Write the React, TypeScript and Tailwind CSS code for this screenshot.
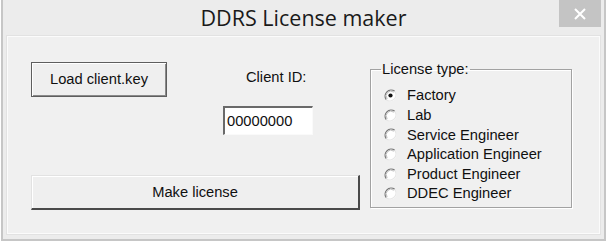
const options = [
  'Factory',
  'Lab',
  'Service Engineer',
  'Application Engineer',
  'Product Engineer',
  'DDEC Engineer',
];

function Radio({ checked }: { checked?: boolean }) {
  return (
    <svg width="13" height="13" viewBox="0 0 13 13" className="shrink-0">
      <circle cx="6.5" cy="6.5" r="6" fill="#ffffff" />
      <path d="M2.3 10.7 A6 6 0 0 1 10.7 2.3" fill="none" stroke="#777777" strokeWidth="1.3" />
      <path d="M3.2 9.8 A4.7 4.7 0 0 1 9.8 3.2" fill="none" stroke="#bdbdbd" strokeWidth="1" />
      <path d="M10.7 2.3 A6 6 0 0 1 2.3 10.7" fill="none" stroke="#e6e6e6" strokeWidth="1.2" />
      {checked && <circle cx="6.5" cy="6.5" r="2.1" fill="#111111" />}
    </svg>
  );
}

export default function App() {
  return (
    <div className="w-[610px] h-[242px] bg-white overflow-hidden font-['Liberation_Sans',Arial,sans-serif] text-[14.7px] text-[#101010]">
      <div className="ml-[1px] w-[605px] h-[241px] bg-[#ececec] border-x-[2px] border-b-[2px] border-[#c6c6c6] flex flex-col">
        {/* title bar */}
        <div className="relative h-[35px] flex items-center justify-center shrink-0">
          <span className="font-['Open_Sans',sans-serif] text-[21.5px] text-[#1a1a1a] leading-none mt-[1px]">
            DDRS License maker
          </span>
          <div className="absolute right-[3px] top-0 w-[42px] h-[27px] bg-[#c4c4c4] flex items-center justify-center">
            <svg width="14" height="12" viewBox="0 0 14 12">
              <path d="M2 1 L12 11 M12 1 L2 11" stroke="#ffffff" strokeWidth="2" />
            </svg>
          </div>
        </div>

        {/* client area */}
        <div className="mx-[4px] mt-[1px] mb-[5px] flex-1 bg-[#f0f0f0] border border-[#fbfbfb] shadow-[0_0_0_1px_#e2e2e2] flex items-start pl-[23px] pt-[25px]">
          <div className="flex flex-col w-[329px]">
            <div className="flex items-start">
              <button className="w-[136px] h-[35px] bg-[#efefef] border border-[#5e5e5e] shadow-[inset_1px_1px_0_#ffffff,inset_-1px_-1px_0_#8a8a8a] flex items-center justify-center">
                Load client.key
              </button>
              <div className="ml-[56px] flex flex-col">
                <span className="ml-[23px] mt-[7px] leading-[17px]">Client ID:</span>
                <div className="mt-[20px] w-[90px] h-[29px] bg-white border-t-[2px] border-l-[2px] border-t-[#6a6a6a] border-l-[#6a6a6a] border-b border-r border-b-[#fafafa] border-r-[#fafafa] flex items-center pl-[2px] leading-none">
                  00000000
                </div>
              </div>
            </div>
            <button className="mt-[40px] w-[329px] h-[35px] bg-[#efefef] border-t border-l border-t-[#e2e2e2] border-l-[#e2e2e2] border-b-[2px] border-r-[2px] border-b-[#4a4a4a] border-r-[#4a4a4a] shadow-[inset_1px_1px_0_#ffffff] flex items-center justify-center">
              Make license
            </button>
          </div>

          <fieldset className="ml-[10px] -mt-[1px] w-[202px] h-[147px] border border-[#a2a2a2] shadow-[inset_1px_1px_0_#ffffff,1px_1px_0_#ffffff]">
            <legend className="ml-[10px] px-[1px] leading-[17px]">License type:</legend>
            <div className="flex flex-col mt-[8px] pl-[13px]">
              {options.map((o, i) => (
                <div key={o} className="flex items-center h-[19.6px] gap-[10px]">
                  <Radio checked={i === 0} />
                  <span className="leading-none">{o}</span>
                </div>
              ))}
            </div>
          </fieldset>
        </div>
      </div>
    </div>
  );
}
